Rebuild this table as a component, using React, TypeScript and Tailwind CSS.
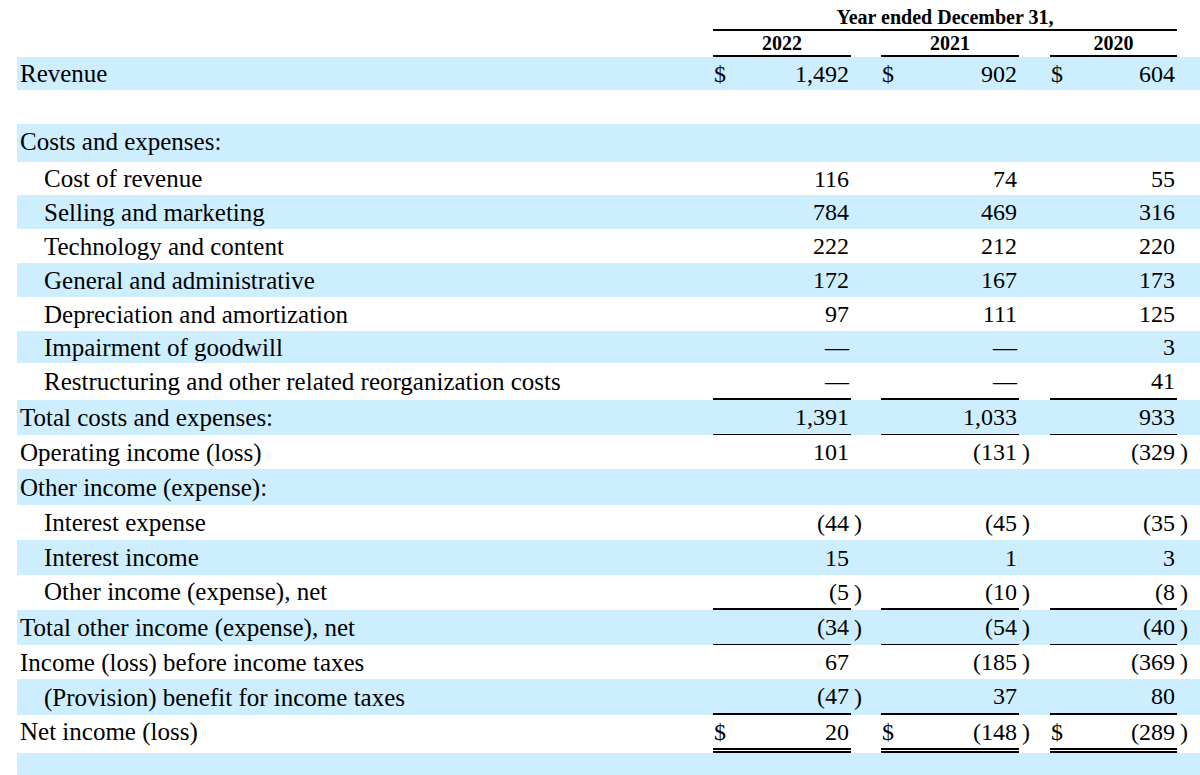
import React from "react";

type Line = "thick" | "thin" | "double" | undefined;

type Row = {
  label: string;
  h: number;
  blue?: boolean;
  indent?: boolean;
  dollar?: boolean;
  vals?: string[];
  line?: Line;
  lift?: string;
};

const rows: Row[] = [
  { label: "Revenue", h: 33, blue: true, dollar: true, vals: ["1,492", "902", "604"] },
  { label: "", h: 34 },
  { label: "Costs and expenses:", h: 38, blue: true, lift: "pb-[4px]" },
  { label: "Cost of revenue", h: 33, indent: true, vals: ["116", "74", "55"] },
  { label: "Selling and marketing", h: 34, blue: true, indent: true, vals: ["784", "469", "316"] },
  { label: "Technology and content", h: 34, indent: true, vals: ["222", "212", "220"] },
  { label: "General and administrative", h: 34, blue: true, indent: true, vals: ["172", "167", "173"] },
  { label: "Depreciation and amortization", h: 34, indent: true, vals: ["97", "111", "125"] },
  { label: "Impairment of goodwill", h: 32, blue: true, indent: true, vals: ["—", "—", "3"] },
  { label: "Restructuring and other related reorganization costs", h: 37, indent: true, vals: ["—", "—", "41"], line: "thick" },
  { label: "Total costs and expenses:", h: 35, blue: true, vals: ["1,391", "1,033", "933"], line: "thin" },
  { label: "Operating income (loss)", h: 34, vals: ["101", "(131)", "(329)"] },
  { label: "Other income (expense):", h: 36, blue: true },
  { label: "Interest expense", h: 35, indent: true, vals: ["(44)", "(45)", "(35)"] },
  { label: "Interest income", h: 35, blue: true, indent: true, vals: ["15", "1", "3"] },
  { label: "Other income (expense), net", h: 35, indent: true, vals: ["(5)", "(10)", "(8)"], line: "thick", lift: "pb-[2px]" },
  { label: "Total other income (expense), net", h: 35, blue: true, vals: ["(34)", "(54)", "(40)"], line: "thin" },
  { label: "Income (loss) before income taxes", h: 34, vals: ["67", "(185)", "(369)"] },
  { label: "(Provision) benefit for income taxes", h: 36, blue: true, indent: true, vals: ["(47)", "37", "80"], line: "thick" },
  { label: "Net income (loss)", h: 38, dollar: true, vals: ["20", "(148)", "(289)"], line: "double", lift: "pb-[5px]" },
  { label: "", h: 30, blue: true },
];

// widths of the three value cells and the paren cells after them
const valW = ["w-[138px]", "w-[138px]", "w-[127px]"];
const parW = ["w-[30px]", "w-[31px]", "w-[23px]"];

const lineCls = (l: Line) =>
  l === "thick"
    ? "border-b-2 border-black"
    : l === "thin"
    ? "border-b border-black"
    : l === "double"
    ? "border-b-[5px] border-double border-black"
    : "";

function App() {
  return (
    <div className="w-[1200px] h-[775px] overflow-hidden bg-white pl-[17px] text-black font-['Liberation_Serif','Times_New_Roman',serif]">
      {/* header */}
      <div className="flex h-[31px] text-[20px] font-bold">
        <div className="w-[696px] shrink-0" />
        <div className="w-[464px] shrink-0 border-b-2 border-black flex items-end justify-center leading-none pb-[2px]">
          Year ended December 31,
        </div>
      </div>
      <div className="flex h-[26px] text-[20px] font-bold">
        <div className="w-[696px] shrink-0" />
        {["2022", "2021", "2020"].map((y, i) => (
          <React.Fragment key={y}>
            <div className={`${valW[i]} shrink-0 border-b-2 border-black flex items-end justify-center leading-none pb-[2px]`}>
              {y}
            </div>
            <div className={`${parW[i]} shrink-0`} />
          </React.Fragment>
        ))}
      </div>

      {/* body */}
      <div className="text-[24px] leading-none">
        {rows.map((r, idx) => (
          <div
            key={idx}
            className={`flex ${r.blue ? "bg-[#cceeff]" : "bg-white"}`}
            style={{ height: r.h }}
          >
            <div className={`w-[696px] shrink-0 flex items-center whitespace-nowrap text-[25px] ${r.indent ? "pl-[27px]" : "pl-[3px]"} ${r.lift ?? ""}`}>
              {r.label}
            </div>
            {r.vals
              ? r.vals.map((v, i) => {
                  const neg = v.startsWith("(");
                  const num = neg ? v.slice(0, -1) : v;
                  return (
                    <React.Fragment key={i}>
                      <div className={`${valW[i]} shrink-0 h-full flex items-center justify-between pl-[1px] pr-[2px] ${lineCls(r.line)}`}>
                        <span>{r.dollar ? "$" : ""}</span>
                        <span>{num}</span>
                      </div>
                      <div className={`${parW[i]} shrink-0 h-full flex items-center pl-[3px] ${r.line === "double" ? "pb-[5px]" : ""}`}>
                        {neg ? ")" : ""}
                      </div>
                    </React.Fragment>
                  );
                })
              : null}
          </div>
        ))}
      </div>
    </div>
  );
}

export default App;
